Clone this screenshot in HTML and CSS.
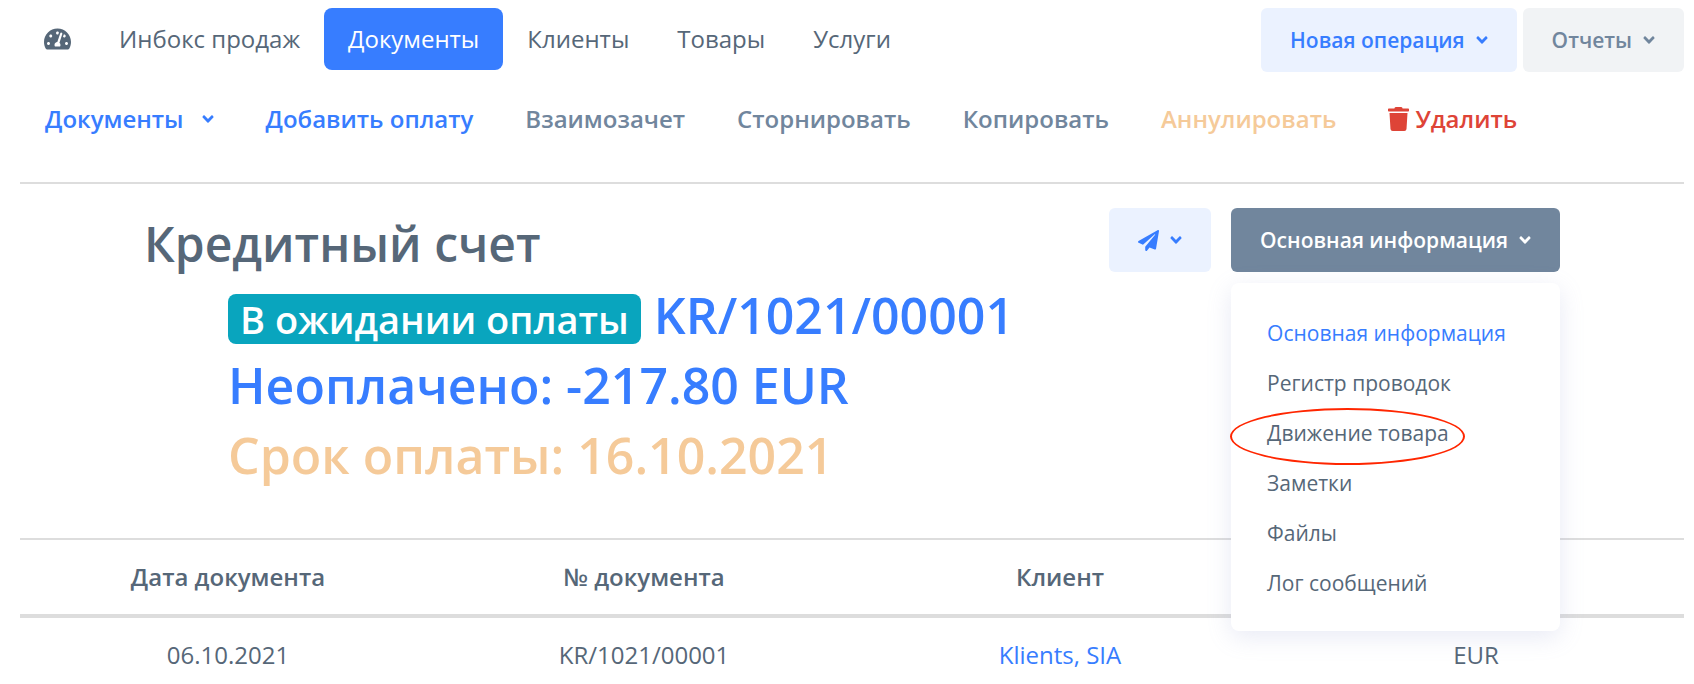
FILE: index.html
```html
<!DOCTYPE html>
<html lang="ru">
<head>
  <meta charset="UTF-8">
  <title>Кредитный счет KR/1021/00001</title>
  <meta name="viewport" content="width=device-width, initial-scale=1">
  <link rel="stylesheet" href="styles.css">
</head>
<body>
  <!-- Shared icons -->
  <svg class="sprite" aria-hidden="true">
    <symbol id="icon-angle" viewBox="0 0 320 512">
      <path d="M143 352.3L7 216.3c-9.4-9.4-9.4-24.6 0-33.9l22.6-22.6c9.4-9.4 24.6-9.4 33.9 0l96.4 96.4 96.4-96.4c9.4-9.4 24.6-9.4 33.9 0l22.6 22.6c9.4 9.4 9.4 24.6 0 33.9l-136 136c-9.2 9.4-24.4 9.4-33.8 0z"/>
    </symbol>
    <symbol id="icon-dashboard" viewBox="0 0 576 512">
      <path d="M288 32C128.94 32 0 160.94 0 320c0 52.8 14.25 102.26 39.06 144.8 5.61 9.62 16.3 15.2 27.44 15.2h443c11.14 0 21.83-5.58 27.44-15.2C561.75 422.26 576 372.8 576 320c0-159.06-128.94-288-288-288zm0 64c14.71 0 26.58 10.13 30.32 23.65-1.11 2.26-2.64 4.23-3.45 6.67l-9.22 27.67c-5.13 3.49-10.97 6.01-17.64 6.01-17.67 0-32-14.33-32-32S270.33 96 288 96zM96 384c-17.67 0-32-14.33-32-32s14.33-32 32-32 32 14.33 32 32-14.33 32-32 32zm48-160c-17.67 0-32-14.33-32-32s14.33-32 32-32 32 14.33 32 32-14.33 32-32 32zm246.77-72.41l-61.33 184C343.13 347.33 352 364.54 352 384c0 11.72-3.38 22.55-8.88 32H232.88c-5.5-9.45-8.88-20.28-8.88-32 0-33.94 26.5-61.43 59.9-63.59l61.34-184.01c4.17-12.56 17.73-19.45 30.36-15.17 12.57 4.19 19.35 17.79 15.17 30.36zm14.66 57.2l15.52-46.55c3.47-1.29 7.13-2.23 11.05-2.23 17.67 0 32 14.33 32 32s-14.33 32-32 32c-11.38-.01-20.89-6.28-26.57-15.22zM480 384c-17.67 0-32-14.33-32-32s14.33-32 32-32 32 14.33 32 32-14.33 32-32 32z"/>
    </symbol>
    <symbol id="icon-send" viewBox="0 0 512 512">
      <path d="M476 3.2L12.5 270.6c-18.1 10.4-15.8 35.6 2.2 43.2L121 358.4l287.3-253.2c5.5-4.9 13.3 2.6 8.6 8.3L176 407v80.5c0 23.6 28.5 32.9 42.5 15.8L282 426l124.6 52.2c14.2 6 30.4-2.9 33-18.2l72-432C515 7.8 493.3-6.8 476 3.2z"/>
    </symbol>
    <symbol id="icon-trash" viewBox="0 0 448 512">
      <path d="M432 32H312l-9.4-18.7A24 24 0 0 0 281.1 0H166.8a23.72 23.72 0 0 0-21.4 13.3L136 32H16A16 16 0 0 0 0 48v32a16 16 0 0 0 16 16h416a16 16 0 0 0 16-16V48a16 16 0 0 0-16-16zM53.2 467a48 48 0 0 0 47.9 45h245.8a48 48 0 0 0 47.9-45L416 128H32z"/>
    </symbol>
  </svg>

  <!-- Main navigation -->
  <header class="topbar">
    <nav class="main-nav">
      <a href="#" class="nav-link" aria-label="Панель"><svg class="icon-dashboard"><use href="#icon-dashboard"/></svg></a>
      <a href="#" class="nav-link">Инбокс продаж</a>
      <a href="#" class="nav-link active">Документы</a>
      <a href="#" class="nav-link">Клиенты</a>
      <a href="#" class="nav-link">Товары</a>
      <a href="#" class="nav-link">Услуги</a>
    </nav>
    <div class="topbar-buttons">
      <button type="button" class="btn btn-soft-primary">Новая операция <svg class="angle"><use href="#icon-angle"/></svg></button>
      <button type="button" class="btn btn-soft-secondary">Отчеты <svg class="angle"><use href="#icon-angle"/></svg></button>
    </div>
  </header>

  <!-- Document actions -->
  <nav class="actions">
    <a href="#" class="action action-menu">Документы <svg class="angle"><use href="#icon-angle"/></svg></a>
    <a href="#" class="action">Добавить оплату</a>
    <a href="#" class="action muted">Взаимозачет</a>
    <a href="#" class="action muted">Сторнировать</a>
    <a href="#" class="action muted">Копировать</a>
    <a href="#" class="action warning">Аннулировать</a>
    <a href="#" class="action danger"><svg class="icon-trash"><use href="#icon-trash"/></svg>Удалить</a>
  </nav>

  <main>
    <section class="doc-header">
      <div class="doc-title">
        <h1>Кредитный счет</h1>
        <div class="doc-status">
          <div><span class="badge">В ожидании оплаты</span> KR/1021/00001</div>
          <div>Неоплачено: -217.80 EUR</div>
          <div class="warning">Срок оплаты: 16.10.2021</div>
        </div>
      </div>
      <div class="doc-buttons">
        <button type="button" class="btn btn-soft-primary" aria-label="Отправить"><svg class="icon-send"><use href="#icon-send"/></svg> <svg class="angle"><use href="#icon-angle"/></svg></button>
        <div class="dropdown">
          <button type="button" class="btn btn-secondary">Основная информация <svg class="angle"><use href="#icon-angle"/></svg></button>
          <div class="dropdown-menu">
            <a href="#" class="dropdown-item current">Основная информация</a>
            <a href="#" class="dropdown-item">Регистр проводок</a>
            <a href="#" class="dropdown-item marked">Движение товара</a>
            <a href="#" class="dropdown-item">Заметки</a>
            <a href="#" class="dropdown-item">Файлы</a>
            <a href="#" class="dropdown-item">Лог сообщений</a>
          </div>
        </div>
      </div>
    </section>

    <table class="doc-table">
      <thead>
        <tr>
          <th>Дата документа</th>
          <th>№ документа</th>
          <th>Клиент</th>
          <th></th>
        </tr>
      </thead>
      <tbody>
        <tr>
          <td>06.10.2021</td>
          <td>KR/1021/00001</td>
          <td><a href="#">Klients, SIA</a></td>
          <td>EUR</td>
        </tr>
      </tbody>
    </table>
  </main>
</body>
</html>
```
FILE: styles.css
```css
:root {
  --primary: #377dff;
  --secondary: #71869d;
  --text: #566778;
  --warning: #f5ca99;
  --danger: #de4437;
  --info: #09a5be;
  --border: #dddddd;
}
* {
  box-sizing: border-box;
}
body {
  margin: 0;
  padding: 8px 10px 0 20px;
  font-family: 'Open Sans', 'Noto Sans', sans-serif;
  font-size: 24px;
  line-height: 36px;
  color: var(--text);
  background: #fff;
}
a {
  color: var(--primary);
  text-decoration: none;
}
svg {
  fill: currentColor;
  flex: none;
}
.sprite {
  display: none;
}

/* Main navigation */
.topbar {
  display: flex;
  justify-content: space-between;
  align-items: flex-start;
}
.main-nav {
  display: flex;
}
.nav-link {
  display: flex;
  align-items: center;
  height: 62px;
  padding: 0 24px;
  border-radius: 8px;
  color: var(--text);
  white-space: nowrap;
}
.nav-link.active {
  background: var(--primary);
  color: #fff;
}
.icon-dashboard {
  width: 27px;
  height: 24px;
}
.topbar-buttons {
  display: flex;
  gap: 6px;
}

/* Buttons */
.btn {
  display: flex;
  align-items: center;
  justify-content: center;
  gap: 11px;
  height: 64px;
  padding: 0 29px;
  border: none;
  border-radius: 6px;
  font-family: inherit;
  font-size: 21px;
  font-weight: 600;
  white-space: nowrap;
  cursor: pointer;
}
.btn-soft-primary {
  background: #ebf2ff;
  color: var(--primary);
}
.btn-soft-secondary {
  background: #f1f3f5;
  color: var(--secondary);
}
.btn-secondary {
  background: var(--secondary);
  color: #fff;
}
.angle {
  width: 12px;
  height: 18px;
}

/* Document actions */
.actions {
  display: flex;
  align-items: center;
  gap: 52px;
  height: 112px;
  padding: 0 25px 16px;
  border-bottom: 2px solid var(--border);
}
.action {
  display: flex;
  align-items: center;
  font-weight: 600;
  white-space: nowrap;
}
.action-menu {
  gap: 18px;
}
.icon-trash {
  width: 21px;
  height: 24px;
  margin-right: 6px;
}
.muted {
  color: var(--secondary);
}
.warning {
  color: var(--warning);
}
.danger {
  color: var(--danger);
}

/* Document header */
.doc-header {
  display: flex;
  justify-content: space-between;
  padding: 24px 124px 48px;
}
h1 {
  margin: 0;
  font-size: 48px;
  line-height: 72px;
  font-weight: 600;
}
.doc-status {
  padding-left: 84px;
  font-size: 50px;
  line-height: 70px;
  font-weight: 600;
  color: var(--primary);
}
.badge {
  display: inline-block;
  padding: 6px 12px;
  border-radius: 8px;
  background: var(--info);
  color: #fff;
  font-size: 38px;
  line-height: 38px;
}
.doc-buttons {
  display: flex;
  align-items: flex-start;
  gap: 20px;
}
.icon-send {
  width: 21px;
  height: 21px;
}

/* Dropdown */
.dropdown {
  position: relative;
}
.dropdown-menu {
  position: absolute;
  top: 100%;
  left: 0;
  right: 0;
  margin-top: 11px;
  padding: 25px 0 23px;
  border-radius: 8px;
  background: #fff;
  box-shadow: 0 6px 24px rgba(140, 152, 204, 0.2);
}
.dropdown-item {
  display: block;
  position: relative;
  padding: 0 36px;
  font-size: 21px;
  line-height: 50px;
  color: var(--text);
  white-space: nowrap;
}
.dropdown-item.current {
  color: var(--primary);
}
/* Red oval round the highlighted item */
.marked::after {
  content: "";
  position: absolute;
  top: 0;
  left: -1px;
  width: 231px;
  height: 53px;
  border: 2px solid #ff2600;
  border-radius: 50%;
}

/* Document table */
.doc-table {
  width: 100%;
  table-layout: fixed;
  border-collapse: collapse;
  text-align: center;
}
.doc-table th {
  padding: 19px 0;
  border-top: 2px solid var(--border);
  border-bottom: 4px solid var(--border);
  font-weight: 600;
}
.doc-table td {
  padding: 19px 0 8px;
}
```
